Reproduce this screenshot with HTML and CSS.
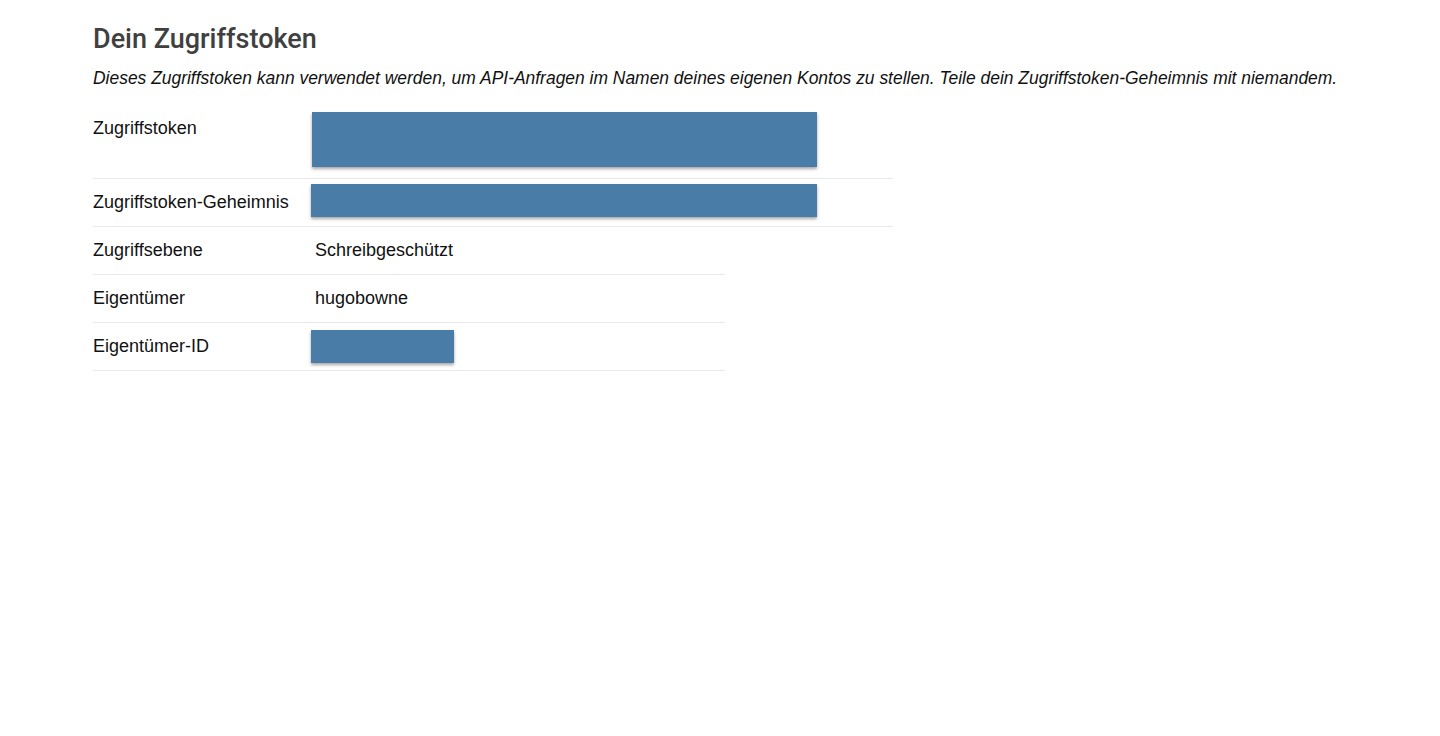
FILE: index.html
```html
<!DOCTYPE html>
<html lang="de">
<head>
    <meta charset="UTF-8">
    <title>Dein Zugriffstoken</title>
    <link rel="stylesheet" href="styles.css">
</head>
<body>
    <div class="page">
        <h1>Dein Zugriffstoken</h1>
        <p class="intro">Dieses Zugriffstoken kann verwendet werden, um API-Anfragen im Namen deines eigenen Kontos zu stellen. Teile dein Zugriffstoken-Geheimnis mit niemandem.</p>

        <table class="keys wide">
            <tr>
                <td class="label">Zugriffstoken</td>
                <td><div class="redacted token"></div></td>
            </tr>
            <tr>
                <td class="label">Zugriffstoken-Geheimnis</td>
                <td><div class="redacted secret"></div></td>
            </tr>
        </table>

        <table class="keys">
            <tr>
                <td class="label">Zugriffsebene</td>
                <td>Schreibgeschützt</td>
            </tr>
            <tr>
                <td class="label">Eigentümer</td>
                <td>hugobowne</td>
            </tr>
            <tr>
                <td class="label">Eigentümer-ID</td>
                <td><div class="redacted owner-id"></div></td>
            </tr>
        </table>
    </div>
</body>
</html>
```

FILE: styles.css
```css
body {
    margin: 0;
    background-color: #fff;
    font-family: "Liberation Sans", Arial, sans-serif;
    color: #111;
}

.page {
    padding: 22px 40px 22px 93px;
}

h1 {
    font-family: Roboto, "Liberation Sans", sans-serif;
    font-weight: 500;
    font-size: 27px;
    line-height: 34px;
    color: #404040;
    margin: 0 0 10px;
}

.intro {
    font-style: italic;
    font-size: 17.45px;
    line-height: 24px;
    margin: 0 0 15px;
    white-space: nowrap;
}

.keys {
    border-collapse: collapse;
    width: 632px;
    font-size: 18px;
    line-height: 24px;
}

.keys.wide {
    width: 800px;
}

.keys td {
    padding: 11px 0 12px;
    vertical-align: top;
    border-bottom: 1px solid #e8e8e8;
}

.keys td.label {
    width: 222px;
}

.redacted {
    background-color: #4a7ca8;
    box-shadow: 0 2px 3px rgba(0, 0, 0, 0.35);
    margin-left: -4px;
}

.token {
    width: 505px;
    height: 55px;
    margin: -4px 0 -1px -3px;
}

.secret {
    width: 506px;
    height: 33px;
    margin-top: -6px;
    margin-bottom: -3px;
}

.owner-id {
    width: 143px;
    height: 33px;
    margin-top: -4px;
    margin-bottom: -5px;
}
```
